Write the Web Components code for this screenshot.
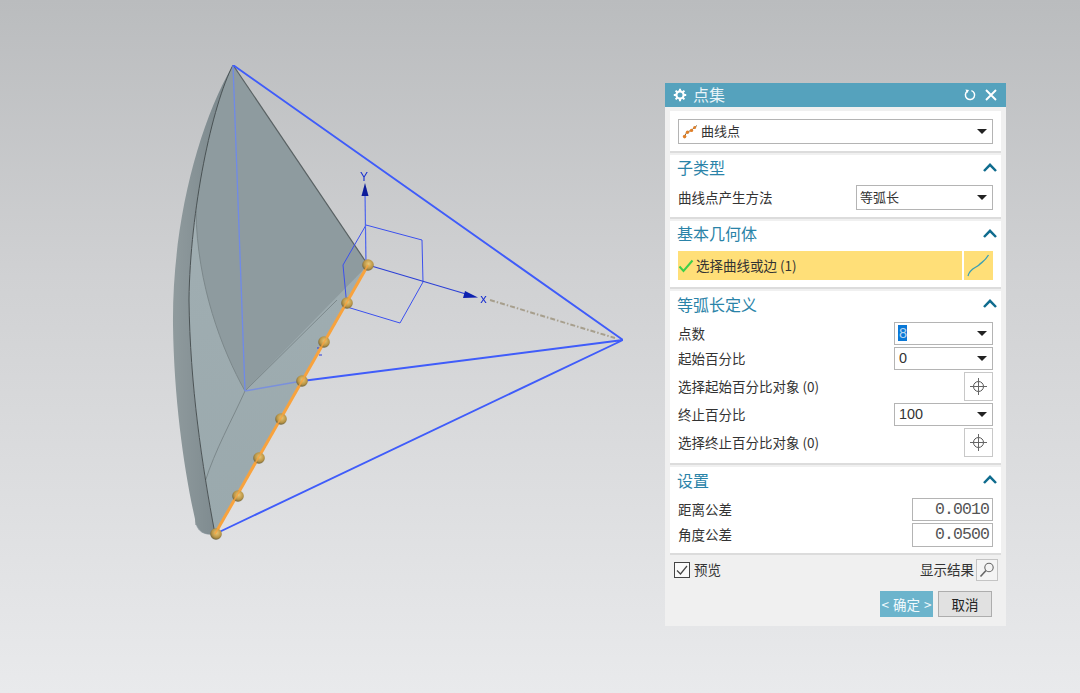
<!DOCTYPE html>
<html>
<head>
<meta charset="utf-8">
<style>
  html, body { margin: 0; height: 100%; }
  body {
    width: 1080px; height: 693px; overflow: hidden; position: relative;
    background: linear-gradient(#babcbe 0, #d0d1d3 40%, #e9eaec 100%);
    font-family: "Noto Sans CJK SC", "Noto Sans", sans-serif;
  }
</style>
</head>
<body>
<cad-scene></cad-scene>
<cad-dialog heading="点集">
  <cad-section plain>
    <cad-select wide curve>曲线点</cad-select>
  </cad-section>
  <cad-section heading="子类型" pad="7" head="30">
    <cad-row label="曲线点产生方法"><cad-select w="137" h="25">等弧长</cad-select></cad-row>
  </cad-section>
  <cad-section heading="基本几何体" pad="7" head="30">
    <cad-picker></cad-picker>
  </cad-section>
  <cad-section heading="等弧长定义" pad="6" head="31">
    <cad-row label="点数"><cad-select w="99" selected>8</cad-select></cad-row>
    <cad-row label="起始百分比"><cad-select w="99">0</cad-select></cad-row>
    <cad-row label="选择起始百分比对象 (0)"><cad-target></cad-target></cad-row>
    <cad-row label="终止百分比"><cad-select w="99">100</cad-select></cad-row>
    <cad-row label="选择终止百分比对象 (0)"><cad-target></cad-target></cad-row>
  </cad-section>
  <cad-section heading="设置" pad="6" head="31">
    <cad-row label="距离公差"><cad-number>0.0010</cad-number></cad-row>
    <cad-row label="角度公差"><cad-number h="24">0.0500</cad-number></cad-row>
  </cad-section>
  <cad-footer slot="footer"></cad-footer>
</cad-dialog>

<script>
const UI_FONT = '"Noto Sans CJK SC", "Noto Sans", sans-serif';

class CadScene extends HTMLElement {
  connectedCallback() {
    this.attachShadow({ mode: 'open' });
    const dots = [[368,265],[347,303],[324,342],[302,381],[281,419],[259,458],[238,496],[216,534]];
    this.shadowRoot.innerHTML = `
      <style>
        :host { position: absolute; left: 0; top: 0; width: 1080px; height: 693px; display: block; }
        svg { display: block; }
        text { font-family: "Liberation Sans", sans-serif; fill: #1a2fd0; }
      </style>
      <svg width="1080" height="693" viewBox="0 0 1080 693">
        <defs>
          <linearGradient id="rim" x1="0" y1="0" x2="1" y2="0">
            <stop offset="0" stop-color="#8f9a9d"/><stop offset="1" stop-color="#78858a"/>
          </linearGradient>
          <linearGradient id="face" x1="0" y1="0" x2="0" y2="1">
            <stop offset="0" stop-color="#a3b0b4"/><stop offset="1" stop-color="#9aa9ad"/>
          </linearGradient>
          <radialGradient id="ball" cx="0.55" cy="0.4" r="0.6">
            <stop offset="0" stop-color="#e8c778"/><stop offset="0.65" stop-color="#bb9646"/><stop offset="1" stop-color="#6e6440"/>
          </radialGradient>
          <filter id="soft" x="0" y="0" width="1" height="1"><feGaussianBlur stdDeviation="0.45"/></filter>
        </defs>
        <g filter="url(#soft)">
        <!-- front face -->
        <path d="M233 65 C212 105 190 210 189 300 C190 385 202 465 215 534 L368 265Z" fill="url(#face)"/>
        <!-- dark triangle -->
        <path d="M233 65 L368 265 L245 391 C222 350 197 285 196 211 C196 170 212 105 233 65Z" fill="#8e9b9f"/>
        <!-- bottom cap -->
        <path d="M205 482 C198 495 195 510 196 525 C199 533 206 536 215 534 Z" fill="#84929a" opacity=".75"/>
        <path d="M245 391 L337 300 M245 391 C222 350 197 285 196 211" fill="none" stroke="#7c888b" stroke-width="1"/>
        <path d="M245 391 C232 420 215 450 205 482 C198 495 195 510 196 525" fill="none" stroke="#7c888b" stroke-width="1"/>
        <!-- thick rim of the part, over the faces -->
        <path d="M233 65 C198 125 172 225 173 325 C174 400 184 470 195 519 C197 530 203 536 215 534 C202 465 190 385 189 300 C190 210 212 105 233 65Z" fill="url(#rim)"/>
        <path d="M233 65 L368 265" stroke="#5a6264" stroke-width="1.2" fill="none"/>
        <path d="M233 65 C212 105 190 210 189 300 C190 385 202 465 215 534" stroke="#4a5254" stroke-width="1" fill="none"/>
        <!-- wireframe -->
        <path d="M233 65 L245 391" stroke="#6f8ae8" stroke-width="1.3" fill="none"/>
        <path d="M245 391 L302 381" stroke="#7a90dc" stroke-width="1.5" fill="none"/>
        <path d="M302 381 L623 340 L215 534 M623 340 L233 65" stroke="#3f5cfa" stroke-width="1.9" fill="none"/>
        <path d="M317 348 H322 M319 355 H322" stroke="#2a3bd8" stroke-width="1" fill="none"/>
        <path d="M490 300 L615 338" stroke="#a79f8d" stroke-width="2" stroke-dasharray="5 2 1.5 2" fill="none"/>
        <!-- csys -->
        <path d="M366 225 L422 240 L423 282 L400 323 L347 307 L343 265Z" stroke="#3b50ee" stroke-width="1" fill="none"/>
        <path d="M366 265 L365 192" stroke="#4e66ee" stroke-width="1.2" fill="none"/>
        <path d="M365 183 L368.5 196 H361.5Z" fill="#0c1c9a"/>
        <text x="364" y="181" font-size="12" text-anchor="middle">Y</text>
        <path d="M368 265 L466 294" stroke="#2c40d6" stroke-width="1.2" fill="none"/>
        <path d="M478 297.5 L463 298 L465 291Z" fill="#1020b0"/>
        <text x="483.5" y="303" font-size="13" text-anchor="middle">x</text>
        <!-- selected edge and points -->
        <path d="M368 265 L215 534" stroke="#f8a33e" stroke-width="3" fill="none"/>
        ${dots.map(d => `<circle cx="${d[0]}" cy="${d[1]}" r="5.8" fill="url(#ball)"/>`).join('')}
        <path d="M368 265 L215 534" stroke="#f8a33e" stroke-width="1.6" fill="none" opacity=".8"/>
        </g>
      </svg>`;
  }
}

class CadDialog extends HTMLElement {
  connectedCallback() {
    this.attachShadow({ mode: 'open' });
    this.shadowRoot.innerHTML = `
      <style>
        :host {
          position: absolute; left: 665px; top: 83px; width: 341px; height: 543px;
          display: flex; flex-direction: column; background: #f0f0f0;
          font-family: ${UI_FONT};
        }
        .bar {
          height: 24px; flex: none; background: #55a2bd; color: #e9f4f8;
          display: flex; align-items: center; padding: 0 9px 0 8px; font-size: 16px;
        }
        .bar span { margin-left: 6px; flex: 1; padding-bottom: 2px; }
        .bar svg { display: block; }
        .bar .spin { margin-right: 9px; }
        .body { display: flex; flex-direction: column; gap: 2px; padding: 4px 5px 0; flex: none; }
      </style>
      <div class="bar">
        <svg width="14" height="14" viewBox="0 0 14 14">
          <circle cx="7" cy="7" r="3.6" fill="none" stroke="#fff" stroke-width="2.2"/>
          <path d="M7 .8V3M7 11V13.2M.8 7H3M11 7H13.2M2.6 2.6 4.2 4.2M9.8 9.8 11.4 11.4M2.6 11.4 4.2 9.8M9.8 4.2 11.4 2.6" stroke="#fff" stroke-width="2"/>
        </svg>
        <span>${this.getAttribute('heading')}</span>
        <svg class="spin" width="12" height="12" viewBox="0 0 12 12">
          <path d="M3.4 2.2 A4.6 4.6 0 1 0 7.4 1.6" fill="none" stroke="#fff" stroke-width="1.5"/>
          <path d="M1.4 .6 5 .9 3.4 4Z" fill="#fff"/>
        </svg>
        <svg width="12" height="12" viewBox="0 0 12 12">
          <path d="M1 1 11 11M11 1 1 11" stroke="#fff" stroke-width="1.9"/>
        </svg>
      </div>
      <div class="body"><slot></slot></div>
      <slot name="footer"></slot>`;
  }
}

class CadSection extends HTMLElement {
  connectedCallback() {
    this.attachShadow({ mode: 'open' });
    const plain = this.hasAttribute('plain');
    const pad = this.getAttribute('pad') || 6;
    const head = this.getAttribute('head') || 30;
    this.shadowRoot.innerHTML = `
      <style>
        :host {
          display: block; background: #fff; border-bottom: 2px solid #dcdcdc;
          padding: ${plain ? '8px 8px 7px' : '0 8px ' + pad + 'px'};
        }
        .head {
          box-sizing: border-box; height: ${head}px; padding-bottom: 6px;
          display: flex; align-items: center; justify-content: space-between;
          font-size: 16px; color: #2a83a8; margin-left: -1px; margin-right: -4px;
        }
        .head svg { display: block; }
        .rows { display: flex; flex-direction: column; gap: 2px; }
      </style>
      ${plain ? '' : `<div class="head"><span>${this.getAttribute('heading')}</span>
        <svg width="14" height="9" viewBox="0 0 14 9"><path d="M1 8 7 1.8 13 8" fill="none" stroke="#0f6c8e" stroke-width="2.5"/></svg></div>`}
      <div class="rows"><slot></slot></div>`;
  }
}

class CadRow extends HTMLElement {
  connectedCallback() {
    this.attachShadow({ mode: 'open' });
    this.shadowRoot.innerHTML = `
      <style>
        :host {
          display: flex; align-items: center; justify-content: space-between;
          font-size: 13.5px; color: #333;
        }
        span { padding-bottom: 2px; }
      </style>
      <span>${this.getAttribute('label')}</span><slot></slot>`;
  }
}

class CadSelect extends HTMLElement {
  connectedCallback() {
    this.attachShadow({ mode: 'open' });
    const w = this.hasAttribute('wide') ? '315px' : this.getAttribute('w') + 'px';
    const h = this.getAttribute('h') || (this.hasAttribute('wide') ? 25 : 23);
    const sel = this.hasAttribute('selected');
    const numeric = /^\d/.test(this.textContent);
    const curve = this.hasAttribute('curve') ? `
      <svg class="ic" width="17" height="17" viewBox="0 0 17 17">
        <path d="M2 14 L5 9 L9 7.5 L15 2.5" fill="none" stroke="#7a6a4a" stroke-width="1"/>
        <circle cx="2.6" cy="13.6" r="1.8" fill="#e0802a"/><circle cx="5.5" cy="9.2" r="1.7" fill="#e0802a"/>
        <circle cx="9.5" cy="7.4" r="1.7" fill="#e0802a"/><circle cx="12.6" cy="4.6" r="1.5" fill="#e0802a"/>
      </svg>` : '';
    this.shadowRoot.innerHTML = `
      <style>
        :host {
          display: flex; align-items: center; box-sizing: border-box;
          width: ${w}; height: ${h}px; border: 1px solid #b4b4b4; background: #fff;
          padding: 0 5px 0 3px; font-size: 13px; color: #333;
        }
        .ic { margin-right: 2px; flex: none; }
        .t { flex: 1; display: flex; padding-bottom: 2px; }
        .t span.s { background: #0a78d7; color: #bcd6ee; padding: 0 0 0 1px; margin-left: 0; }
        i { width: 0; height: 0; border-left: 5px solid transparent; border-right: 5px solid transparent; border-top: 5px solid #222; }
        .val { font-family: "Liberation Sans", ${UI_FONT}; font-size: 14.4px; margin-left: 1px; }
      </style>
      ${curve}
      <div class="t"><span class="${sel ? 's ' : ''}${numeric ? 'val' : ''}"><slot></slot></span></div>
      <i></i>`;
  }
}

class CadNumber extends HTMLElement {
  connectedCallback() {
    this.attachShadow({ mode: 'open' });
    const h = this.getAttribute('h') || 23;
    this.shadowRoot.innerHTML = `
      <style>
        :host {
          display: block; box-sizing: border-box; width: 81px; height: ${h}px;
          border: 1px solid #b4b4b4; background: #fff; text-align: right; padding-right: 3px;
          font: 16.5px/21px "Liberation Mono", monospace; letter-spacing: -0.9px; color: #555;
        }
      </style><slot></slot>`;
  }
}

class CadTarget extends HTMLElement {
  connectedCallback() {
    this.attachShadow({ mode: 'open' });
    this.shadowRoot.innerHTML = `
      <style>
        :host {
          display: flex; align-items: center; justify-content: center; box-sizing: border-box;
          width: 29px; height: 29px; border: 1px solid #c8c8c8; background: #fff;
        }
      </style>
      <svg width="19" height="19" viewBox="0 0 19 19">
        <circle cx="9.5" cy="9.5" r="5" fill="none" stroke="#555" stroke-width="1"/>
        <path d="M9.5 1V18M1 9.5H18" stroke="#666" stroke-width="1"/>
      </svg>`;
  }
}

class CadPicker extends HTMLElement {
  connectedCallback() {
    this.attachShadow({ mode: 'open' });
    this.shadowRoot.innerHTML = `
      <style>
        :host { display: flex; gap: 2px; height: 29px; font-size: 13.5px; color: #333; }
        .main { flex: 1; background: #ffdf78; display: flex; align-items: center; padding-left: 0; }
        .main svg { margin-right: 2px; }
        .main span { padding-bottom: 1px; }
        .btn { width: 29px; background: #ffdf78; display: flex; align-items: center; justify-content: center; }
      </style>
      <div class="main">
        <svg width="16" height="16" viewBox="0 0 16 16"><path d="M1.5 8.5 5.5 13 14.5 2.5" fill="none" stroke="#3ecf4a" stroke-width="2"/></svg>
        <span>选择曲线或边 (1)</span>
      </div>
      <div class="btn">
        <svg width="25" height="25" viewBox="0 0 25 25"><path d="M2 23 C4 15 10 15 13 12 C16 9 19 8 22.5 2" fill="none" stroke="#3a9fb5" stroke-width="1.3"/></svg>
      </div>`;
  }
}

class CadFooter extends HTMLElement {
  connectedCallback() {
    this.attachShadow({ mode: 'open' });
    this.shadowRoot.innerHTML = `
      <style>
        :host { display: block; padding: 4px 8px 0 9px; font-size: 13.5px; color: #333; }
        .top { display: flex; align-items: center; height: 22px; }
        .top span { padding-bottom: 2px; }
        .check {
          box-sizing: border-box; width: 16px; height: 16px; border: 1px solid #444; background: #fafafa;
          display: flex; align-items: center; justify-content: center; margin-right: 4px;
        }
        .grow { flex: 1; }
        .find {
          box-sizing: border-box; width: 22px; height: 22px; border: 1px solid #c4c4c4; background: #f4f4f4;
          margin-left: 2px; display: flex; align-items: center; justify-content: center;
        }
        .btns { display: flex; justify-content: flex-end; gap: 5px; margin-top: 10px; padding-right: 6px; }
        .ok, .no { box-sizing: border-box; height: 26px; display: flex; align-items: center; justify-content: center; }
        .ok { width: 53px; background: #6cb4cc; color: #f2fafd; gap: 4px; }
        .no { width: 54px; background: #e1e1e1; border: 1px solid #adadad; color: #222; }
      </style>
      <div class="top">
        <div class="check"><svg width="14" height="14" viewBox="0 0 14 14"><path d="M2 7.5 5.5 11 12 3" fill="none" stroke="#444" stroke-width="1.2"/></svg></div>
        <span>预览</span>
        <div class="grow"></div>
        <span>显示结果</span>
        <div class="find"><svg width="18" height="18" viewBox="0 0 18 18"><circle cx="11" cy="6.5" r="4.2" fill="none" stroke="#666" stroke-width="1.1"/><path d="M8 9.5 2.5 15.5" stroke="#666" stroke-width="1.6"/></svg></div>
      </div>
      <div class="btns">
        <div class="ok"><span>&lt;</span><span>确定</span><span>&gt;</span></div>
        <div class="no">取消</div>
      </div>`;
  }
}

customElements.define('cad-scene', CadScene);
customElements.define('cad-dialog', CadDialog);
customElements.define('cad-section', CadSection);
customElements.define('cad-row', CadRow);
customElements.define('cad-select', CadSelect);
customElements.define('cad-number', CadNumber);
customElements.define('cad-target', CadTarget);
customElements.define('cad-picker', CadPicker);
customElements.define('cad-footer', CadFooter);
</script>
</body>
</html>
